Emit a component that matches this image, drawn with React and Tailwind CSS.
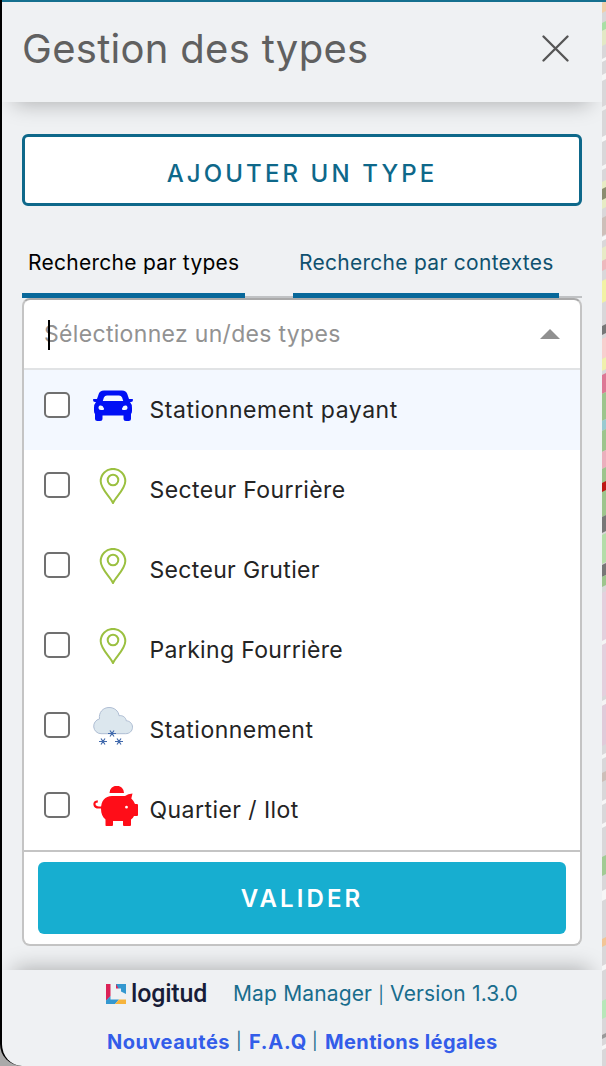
import React from "react";

function Car() {
  return (
    <svg className="h-[31px] w-10" viewBox="0 0 40 31">
      <path fill="#0010f5" fillRule="evenodd" d="M11 0.5H29C32 0.5 33.500 2 34.300 4L36 9H39.4Q40 9 40 10Q40 12 38 12H37Q39 14 39 18V21Q39 23 38 24V28.5Q38 31 35.5 31H33Q30.5 31 30.5 28.5V25.5H9.5V28.5Q9.5 31 7 31H4.500Q2 31 2 28.500V24Q1 23 1 21V18Q1 14 3 12H2Q0 12 0 10Q0 9 .6 9H4L5.700 4C6.500 2 8 .5 11 .5ZM14 5.500Q11.800 5.500 10.900 7.500L9.800 11H30.200L29.100 7.500Q28.200 5.500 26 5.500ZM5.500 17.500C5.500 15.300 8 15 9.500 16L11 18.500Q11.500 20 9.500 20H8Q5.500 20 5.500 17.500ZM34.500 17.500C34.500 15.300 32 15 30.500 16L29 18.500Q28.500 20 30.500 20H32Q34.500 20 34.500 17.500Z" />
    </svg>
  );
}

function Pin() {
  return (
    <svg className="h-9 w-10" viewBox="0 0 40 36" fill="none" stroke="#9bc040" strokeWidth="2">
      <path d="M20 35C17.500 29 7.700 21 7.700 13.200A12.300 12.300 0 0 1 32.300 13.200C32.300 21 22.500 29 20 35Z" />
      <circle cx="20" cy="12" r="5.300" />
    </svg>
  );
}

function Snow() {
  return (
    <svg className="h-10 w-10" viewBox="0 0 40 40" fill="none">
      <path d="M8 26.700A7.500 7.500 0 0 1 6.500 11.900C5.500 5.500 10 .5 16 .5C21.500 .5 25.500 4 26 8.700C29.500 8 33 10.500 33.200 13.700C37 14 39.500 16.800 39.500 20.200C39.500 24 36.500 26.700 32.500 26.700Z" fill="#dce7ee" stroke="#aebdd3" strokeWidth="1" />
      <g stroke="#4169ac" strokeWidth="1.200">
        <path d="M15 26.500H23M17 23.500L21 29.500M21 23.500L17 29.500M6 34.500H14M8 31.500L12 37.500M12 31.500L8 37.500M22 34.500H30M24 31.500L28 37.500M28 31.500L24 37.500" />
      </g>
    </svg>
  );
}

function Piggy() {
  return (
    <svg className="h-10 w-[46px] shrink-0" viewBox="0 0 46 40">
      <path fill="#ff0d18" fillRule="evenodd" d="M16.500 7A7.200 7.200 0 0 1 31 7ZM19 10H32Q35 7.500 39.500 7.500L38.300 12.500Q41 15 42 18H44Q45 18 45 19V29Q45 30 44 30H41Q40 32 38 33.500V39Q38 40 37 40H31Q30 40 30 39V35H20V39Q20 40 19 40H13Q12.500 40 12.500 39V33.500C9.500 31 8 27.500 8 23C8 15 12 10 19 10ZM33.500 19.800A1.400 1.400 0 1 0 33.500 22.600A1.400 1.400 0 1 0 33.500 19.800Z" />
      <path d="M9 21.500H6C.5 21.500 -.2 15.500 4.800 15.300" fill="none" stroke="#ff0d18" strokeWidth="2.200" />
    </svg>
  );
}

function Logo() {
  return (
    <svg className="h-5 w-5" viewBox="0 0 20 20">
      <path fill="#db2257" d="M0 0H4.500V12L0 17Z" />
      <path fill="#3498d0" d="M0 20V16.500L4.500 12V15.500H13L9 20Z" />
      <path fill="#f6b43c" d="M9 20L13 15.500H20V20Z" />
      <path fill="#3498d0" d="M10 0H20V10L15 7.500V4.500H12.500L10 2Z" />
      <path fill="#db2257" d="M10 0L12.500 4.500H10Z" />
    </svg>
  );
}

/* Visible sliver of the map: [y, height, colour] */
const mapBands = [
  [2, 10, "#f1cfaa"], [22, 8, "#a9dfa5"], [30, 15, "#e2e8c5"], [58, 3, "#f7f7f7"], [74, 6, "#f5f5f5"],
  [106, 4, "#efefef"], [136, 5, "#f7f7f7"], [165, 4, "#f5f5f5"], [181, 27, "#e6ebc4"], [188, 11, "#8b8d70"],
  [217, 18, "#cdbfb9"], [236, 4, "#f7f7f7"], [247, 13, "#e7eac6"], [260, 10, "#eeb8bd"], [280, 22, "#f1f2a5"], [325, 9, "#777777"],
  [338, 20, "#f8cfce"], [358, 12, "#f0f0ad"], [374, 19, "#dd7895"], [393, 27, "#9dc58d"], [420, 10, "#99cad0"],
  [430, 21, "#9dc58d"], [451, 17, "#ebafbd"], [468, 48, "#9dc58d"], [482, 9, "#be1714"], [516, 16, "#777777"],
  [534, 29, "#b4dda9"], [564, 12, "#777777"], [576, 10, "#9dc58d"], [592, 104, "#e4cfdd"], [640, 4, "#f4f4f4"],
  [700, 5, "#f4f4f4"], [705, 40, "#e1cad9"], [754, 4, "#f5f5f5"], [772, 9, "#cdbfb9"], [800, 4, "#f6f6f6"],
  [823, 4, "#f6f6f6"], [856, 19, "#a1cb94"], [890, 10, "#f6f6f6"], [938, 8, "#f2c596"], [965, 5, "#f6f6f6"],
  [1000, 18, "#b7e7b9"], [1034, 4, "#999999"], [1045, 4, "#f6f6f6"],
];

const rows = [
  { label: "Stationnement payant", icon: <Car />, offset: "pt-5", text: "tracking-[0.53px]" },
  { label: "Secteur Fourrière", icon: <Pin />, offset: "pt-[18px]", text: "tracking-[0.38px]" },
  { label: "Secteur Grutier", icon: <Pin />, offset: "pt-[18px]", text: "tracking-[0.33px]" },
  { label: "Parking Fourrière", icon: <Pin />, offset: "pt-[18px]", text: "tracking-[0.34px]" },
  { label: "Stationnement", icon: <Snow />, offset: "pt-[17px]", text: "tracking-[0.5px]" },
  { label: "Quartier / Ilot", icon: <Piggy />, offset: "pt-4", text: "tracking-[0.45px]" },
];

export default function App() {
  return (
    <div className="flex h-[1066px] w-[606px] overflow-hidden bg-[#aaa] font-['Inter',sans-serif]">
      <div className="flex w-[602px] shrink-0 flex-col overflow-hidden rounded-bl-[22px] border-l-2 border-black bg-[#eff1f3]">
        <div className="h-[2px] shrink-0 bg-[#15708f]" />
        <header className="relative flex h-[100px] shrink-0 justify-between pl-5 pr-[33px] shadow-[0_14px_20px_-12px_rgba(0,0,0,0.27)]">
          <h1 className="mt-[19px] whitespace-nowrap text-[40px] leading-[56px] tracking-[0.3px] text-[#606060]">Gestion des types</h1>
          <svg className="mt-[33px] h-7 w-7" viewBox="0 0 28 28">
            <path d="M2.500 1.500L26.500 25.500M26.500 1.500L2.500 25.500" stroke="#555" strokeWidth="2.300" strokeLinecap="round" />
          </svg>
        </header>
        <main className="flex h-[868px] shrink-0 flex-col px-5 pt-8">
          <button className="h-[72px] w-[560px] shrink-0 rounded-[6px] border-[3px] border-[#0e688a] bg-white pt-[7px] text-[24px] font-medium tracking-[3.1px] text-[#0e688a]">AJOUTER UN TYPE</button>
          <nav className="flex h-[92px] w-[560px] shrink-0 gap-12 border-b-2 border-[#c0c2c4] text-[21px] tracking-[0.28px]">
            <div className="-mb-[2px] h-[92px] w-[223px] shrink-0 whitespace-nowrap border-b-[5px] border-[#08689a] pl-[6px] pt-[42px] leading-[30px] text-black">Recherche par types</div>
            <div className="-mb-[2px] h-[92px] w-[266px] shrink-0 whitespace-nowrap border-b-[5px] border-[#08689a] pl-[6px] pt-[42px] leading-[30px] text-[#10516f]">Recherche par contextes</div>
          </nav>
          <section className="flex h-[648px] w-[560px] shrink-0 flex-col overflow-hidden rounded-[8px] border-2 border-[#c4c4c4] border-t-[#aaa] bg-white">
            <div className="flex h-[70px] shrink-0 items-center justify-between border-b-2 border-[#e1e3e5] pl-5 pr-5">
              <span className="relative whitespace-nowrap text-[23px] tracking-[0.32px] text-[#929292]">
                Sélectionnez un/des types
                <span className="absolute left-1 top-[3px] h-[30px] w-[2px] bg-black" />
              </span>
              <svg className="h-[10px] w-5" viewBox="0 0 20 10"><path d="M0 10L10 0L20 10Z" fill="#909090" /></svg>
            </div>
            <div className="h-[480px] shrink-0">
              {rows.map((row, i) => (
                <div key={row.label} className={i === 0 ? "flex h-20 bg-[#f3f8ff] pl-5" : "flex h-20 bg-white pl-5"}>
                  <span className="mt-[22px] h-[26px] w-[26px] shrink-0 rounded-[5px] border-2 border-[#707070] bg-white" />
                  <div className={`ml-[23px] w-[46px] shrink-0 ${row.offset}`}>{row.icon}</div>
                  <span className={`ml-[10.5px] whitespace-nowrap pt-6 text-[23px] leading-8 text-[#242424] ${row.text}`}>{row.label}</span>
                </div>
              ))}
            </div>
            <div className="h-[94px] shrink-0 border-t-2 border-[#c4c4c4] px-[14px] pt-[10px]">
              <button className="h-[72px] w-[528px] rounded-[6px] bg-[#17aed0] pt-[2px] text-[24px] font-semibold tracking-[3.1px] text-white">VALIDER</button>
            </div>
          </section>
        </main>
        <footer className="relative h-24 shrink-0 shadow-[0_-14px_20px_-12px_rgba(0,0,0,0.27)]">
          <div className="flex h-12 items-center pl-[104px] text-[21px] text-[#196d8d]">
            <Logo />
            <span className="ml-[5px] w-[76px] whitespace-nowrap font-['Roboto',sans-serif] text-[25px] font-medium leading-7 tracking-[-0.2px] text-[#181d38]">logitud</span>
            <span className="ml-[26px] whitespace-nowrap tracking-[0.15px]">Map Manager <span className="text-[17px]">|</span> Version 1.3.0</span>
          </div>
          <div className="flex h-12 items-center pl-[105px] text-[20px] text-[#196d8d]">
            <b className="w-[129px] shrink-0 tracking-[0.5px] text-[#335de9]">Nouveautés</b>
            <span className="w-[13px] shrink-0 text-[17px]">|</span>
            <b className="w-[63px] shrink-0 tracking-[0.8px] text-[#335de9]">F.A.Q</b>
            <span className="w-[13px] shrink-0 text-[17px]">|</span>
            <b className="whitespace-nowrap tracking-[0.38px] text-[#335de9]">Mentions légales</b>
          </div>
        </footer>
      </div>
      <svg className="h-[1066px] w-1 shrink-0" viewBox="0 0 4 1066">
        <path fill="#d9d7d9" d="M0 0H4V1066H0Z" />
        {mapBands.map(([y, h, color]) => (
          <path key={y} fill={color} d={`M0 ${y + 1}L4 ${y - 1}V${y + h - 1}L0 ${y + h + 1}Z`} />
        ))}
        <path fill="#15708f" d="M0 0H4V2H0Z" />
      </svg>
    </div>
  );
}
